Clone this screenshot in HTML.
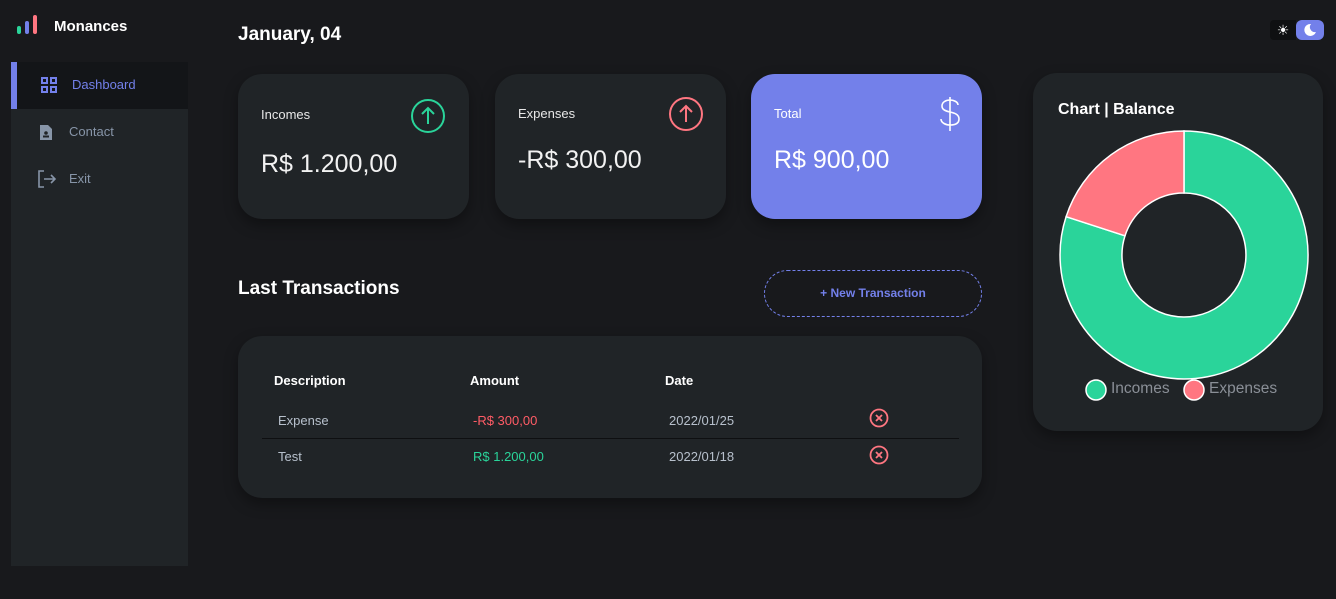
<!DOCTYPE html>
<html><head><meta charset="utf-8"><style>
*{margin:0;padding:0;box-sizing:border-box}
body{width:1336px;height:599px;background:#18191c;font-family:"Liberation Sans",sans-serif;color:#fff;position:relative;overflow:hidden}
.a{position:absolute}
.side{left:11px;top:0;width:177px;height:566px;background:#202427}
.top{left:0;top:0;width:188px;height:62px;background:#18191c}
.card{background:#202427;border-radius:24px;box-shadow:0 6px 14px rgba(0,0,0,.35)}
.lbl{font-size:13px;color:#e8e8e8}
.val{font-size:25px;color:#f2f2f2}
.th{font-size:13px;font-weight:bold;color:#fff}
.td{font-size:13px;color:#b7c0cc}
</style></head><body>
<div class="a top"></div>
<div class="a side" style="top:62px;height:504px"></div>
<svg class="a" style="left:16px;top:14px" width="24" height="22"><rect x="1" y="12" width="4" height="8" rx="2" fill="#2ad49a"/><rect x="9" y="7" width="4" height="13" rx="2" fill="#7380ea"/><rect x="17" y="1" width="4" height="19" rx="2" fill="#ff7681"/></svg>
<div class="a" style="left:54px;top:18px;font-size:15px;font-weight:bold">Monances</div>
<div class="a" style="left:11px;top:62px;width:177px;height:47px;background:#131518"></div>
<div class="a" style="left:11px;top:62px;width:6px;height:47px;background:#7380ea"></div>
<svg class="a" style="left:41px;top:77px" width="16" height="16" fill="none" stroke="#7380ea" stroke-width="2"><rect x="1" y="1" width="5" height="5"/><rect x="10" y="1" width="5" height="5"/><rect x="1" y="10" width="5" height="5"/><rect x="10" y="10" width="5" height="5"/></svg>
<div class="a" style="left:72px;top:77px;font-size:13px;color:#7380ea">Dashboard</div>
<svg class="a" style="left:39px;top:124px" width="14" height="17"><path d="M1 1h8l4 4v11H1z" fill="#8795a8"/><circle cx="7" cy="9" r="1.8" fill="#202427"/><rect x="4" y="11.5" width="6" height="2" fill="#202427"/></svg>
<div class="a" style="left:69px;top:124px;font-size:13px;color:#8795a8">Contact</div>
<svg class="a" style="left:37px;top:170px" width="20" height="18" fill="none" stroke="#8795a8" stroke-width="1.6"><path d="M7 1H2v16h5M7 9h11M14 5l4 4-4 4"/></svg>
<div class="a" style="left:69px;top:171px;font-size:13px;color:#8795a8">Exit</div>

<div class="a" style="left:238px;top:24px;font-size:19px;font-weight:bold">January, 04</div>
<div class="a" style="left:1270px;top:20px;width:26px;height:20px;background:#0f1012;border-radius:4px 0 0 4px;color:#fff;font-size:14px;text-align:center;line-height:20px">☀</div>
<div class="a" style="left:1296px;top:20px;width:28px;height:20px;background:#7380ea;border-radius:6px"></div>
<svg class="a" style="left:1303px;top:23px" width="14" height="14"><path d="M8 1a6 6 0 1 0 5 8a5 5 0 0 1-5-8z" fill="#fff"/></svg>

<div class="a card" style="left:238px;top:74px;width:231px;height:145px"></div>
<div class="a lbl" style="left:261px;top:107px">Incomes</div>
<svg class="a" style="left:410px;top:98px" width="36" height="36" fill="none" stroke="#2ad49a" stroke-width="2"><circle cx="18" cy="18" r="16"/><path d="M18 26V10M12 16l6-6 6 6"/></svg>
<div class="a val" style="left:261px;top:150px">R$ 1.200,00</div>

<div class="a card" style="left:495px;top:74px;width:231px;height:145px"></div>
<div class="a lbl" style="left:518px;top:106px">Expenses</div>
<svg class="a" style="left:668px;top:96px" width="36" height="36" fill="none" stroke="#ff7681" stroke-width="2"><circle cx="18" cy="18" r="16"/><path d="M18 26V10M12 16l6-6 6 6"/></svg>
<div class="a val" style="left:518px;top:146px">-R$ 300,00</div>

<div class="a card" style="left:751px;top:74px;width:231px;height:145px;background:#7380ea"></div>
<div class="a lbl" style="left:774px;top:106px;color:#fff">Total</div>
<svg class="a" style="left:936px;top:96px" width="28" height="36" fill="none" stroke="#fff" stroke-width="1.6"><path d="M14 1v34M22 9c0-3-4-5-8-5s-8 2-8 6 4 5 8 6 9 2 9 7-5 6-9 6-9-2-9-6"/></svg>
<div class="a val" style="left:774px;top:146px;color:#fff">R$ 900,00</div>

<div class="a" style="left:238px;top:278px;font-size:19px;font-weight:bold">Last Transactions</div>
<div class="a" style="left:764px;top:270px;width:218px;height:47px;border:1px dashed #7380ea;border-radius:24px;color:#7380ea;font-size:12px;font-weight:bold;text-align:center;line-height:45px">+ New Transaction</div>

<div class="a card" style="left:238px;top:336px;width:744px;height:162px"></div>
<div class="a th" style="left:274px;top:373px">Description</div>
<div class="a th" style="left:470px;top:373px">Amount</div>
<div class="a th" style="left:665px;top:373px">Date</div>
<div class="a td" style="left:278px;top:413px">Expense</div>
<div class="a td" style="left:473px;top:413px;color:#ff5c66">-R$ 300,00</div>
<div class="a td" style="left:669px;top:413px">2022/01/25</div>
<div class="a" style="left:262px;top:438px;width:697px;height:1px;background:#0e0f11"></div>
<div class="a td" style="left:278px;top:449px">Test</div>
<div class="a td" style="left:473px;top:449px;color:#2ad49a">R$ 1.200,00</div>
<div class="a td" style="left:669px;top:449px">2022/01/18</div>
<svg class="a" style="left:869px;top:408px" width="20" height="20" fill="none" stroke="#ff7681" stroke-width="1.8"><circle cx="10" cy="10" r="8.5"/><path d="M7 7l6 6M13 7l-6 6"/></svg>
<svg class="a" style="left:869px;top:445px" width="20" height="20" fill="none" stroke="#ff7681" stroke-width="1.8"><circle cx="10" cy="10" r="8.5"/><path d="M7 7l6 6M13 7l-6 6"/></svg>

<div class="a card" style="left:1033px;top:73px;width:290px;height:358px"></div>
<div class="a" style="left:1058px;top:101px;font-size:16px;font-weight:bold">Chart | Balance</div>
<svg class="a" style="left:1059px;top:130px" width="250" height="250">
<path d="M125 1A124 124 0 1 1 7.1 86.7L66 105.8A62 62 0 1 0 125 63Z" fill="#2ad49a" stroke="#fff" stroke-width="1.5"/>
<path d="M125 1L125 63A62 62 0 0 0 66 105.8L7.1 86.7A124 124 0 0 1 125 1Z" fill="#ff7681" stroke="#fff" stroke-width="1.5"/>
</svg>
<svg class="a" style="left:1085px;top:379px" width="24" height="24"><circle cx="11" cy="11" r="10" fill="#2ad49a" stroke="#fff" stroke-width="1.5"/></svg>
<div class="a" style="left:1111px;top:380px;font-size:15.5px;color:#8a8f97">Incomes</div>
<svg class="a" style="left:1183px;top:379px" width="24" height="24"><circle cx="11" cy="11" r="10" fill="#ff7681" stroke="#fff" stroke-width="1.5"/></svg>
<div class="a" style="left:1209px;top:380px;font-size:15.5px;color:#8a8f97">Expenses</div>
</body></html>
